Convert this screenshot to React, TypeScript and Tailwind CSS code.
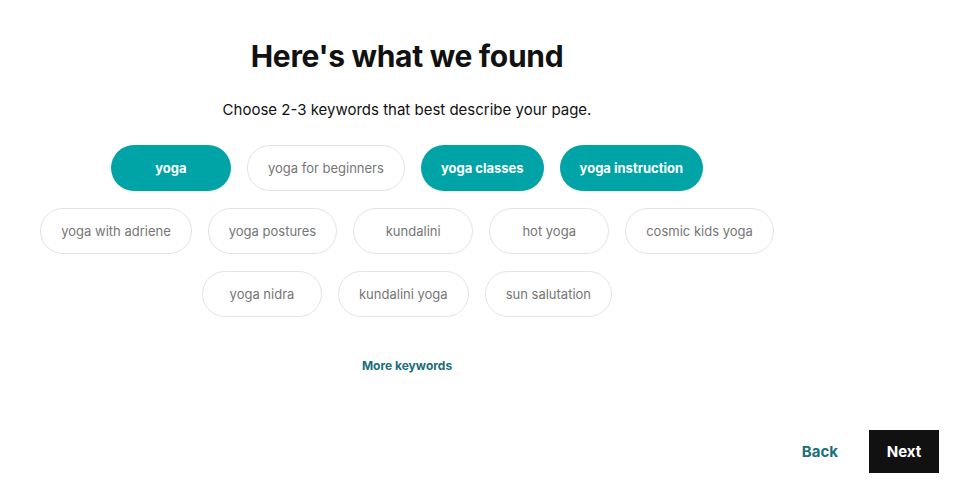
import React from "react";

const keywords = [
  { label: "yoga", selected: true },
  { label: "yoga for beginners", selected: false },
  { label: "yoga classes", selected: true },
  { label: "yoga instruction", selected: true },
  { label: "yoga with adriene", selected: false },
  { label: "yoga postures", selected: false },
  { label: "kundalini", selected: false },
  { label: "hot yoga", selected: false },
  { label: "cosmic kids yoga", selected: false },
  { label: "yoga nidra", selected: false },
  { label: "kundalini yoga", selected: false },
  { label: "sun salutation", selected: false },
];

export default function App() {
  return (
    <div className="relative h-[487px] w-[956px] bg-white font-['Inter',sans-serif] text-[#111]">
      {/* ===== MAIN COLUMN ===== */}
      <div className="flex w-[814px] flex-col items-center pt-[36px]">
        <h1 className="text-[30px] font-bold leading-[40px] tracking-[-0.01em] text-[#111]">
          Here's what we found
        </h1>
        <p className="mt-[23px] text-[15px] leading-[22px] text-[#111]">
          Choose 2-3 keywords that best describe your page.
        </p>

        <div className="mt-[24px] flex w-[744px] flex-wrap justify-center gap-x-4 gap-y-[17px]">
          {keywords.map((k) => (
            <button
              key={k.label}
              className={[
                "h-[46px] min-w-[120px] rounded-full px-5 text-[13px] leading-none",
                k.selected
                  ? "bg-[#00a4a6] font-bold text-white"
                  : "border border-[#e4e4e4] bg-white text-[#767676]",
              ].join(" ")}
            >
              {k.label}
            </button>
          ))}
        </div>

        <a href="#more" className="mt-[40px] text-[12px] font-bold text-[#1b6f7a]">
          More keywords
        </a>
      </div>

      {/* ===== FOOTER ACTIONS ===== */}
      <div className="absolute right-[17px] top-[430px] flex items-center gap-[31px]">
        <button className="pt-[2px] text-[15px] font-bold text-[#1b6f7a]">Back</button>
        <button className="h-[43px] w-[70px] bg-[#111] pt-[1px] text-[15px] font-bold text-white">
          Next
        </button>
      </div>
    </div>
  );
}
